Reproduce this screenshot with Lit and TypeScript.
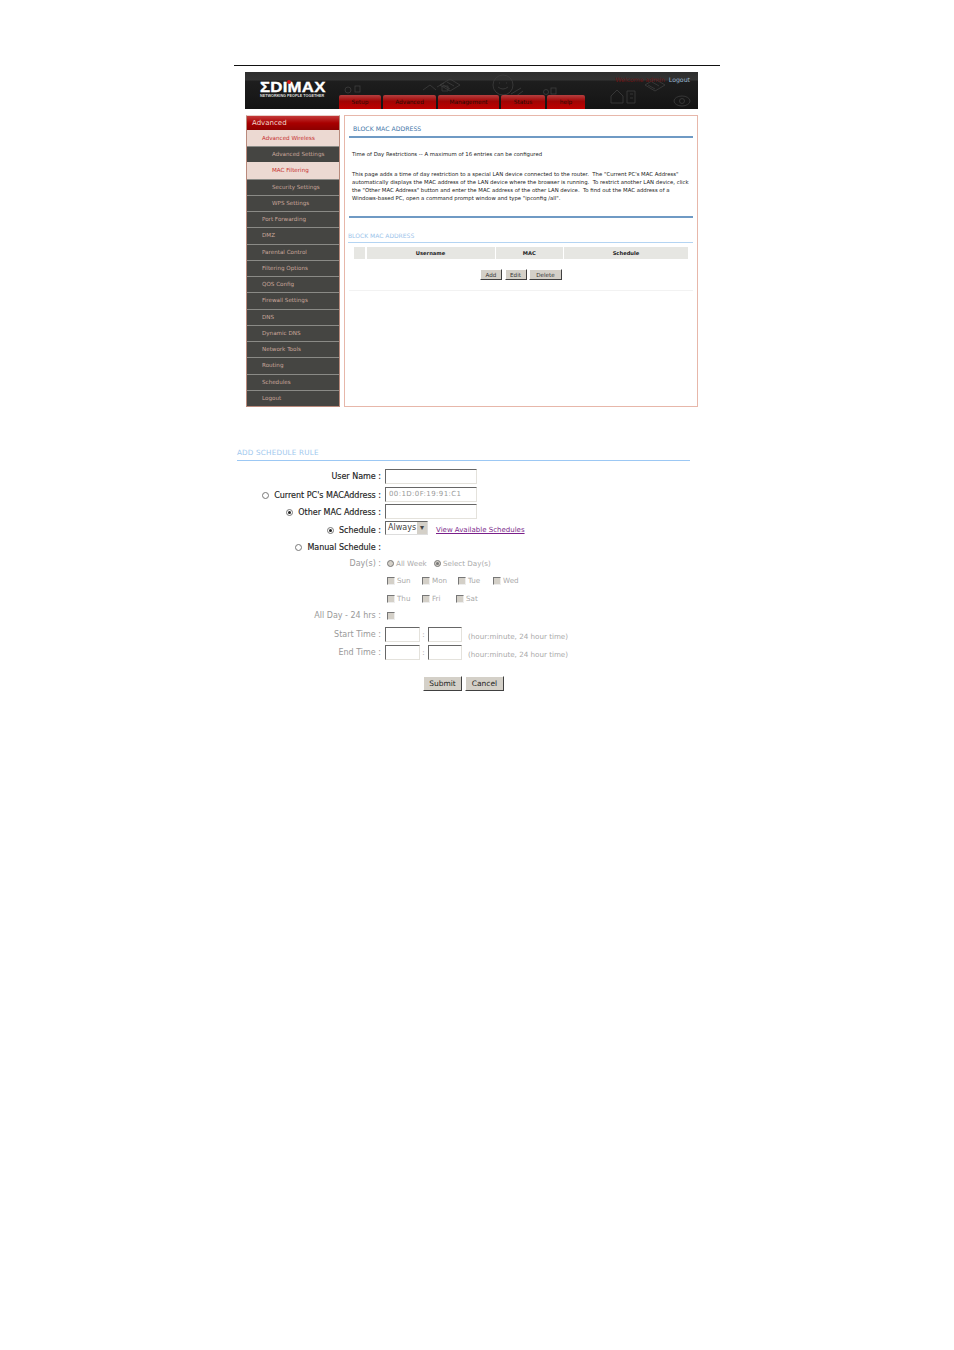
import { LitElement, html, css, svg } from "lit";
import { customElement } from "lit/decorators.js";

const NAV: [string, string][] = [
  ["Advanced Wireless", "on"],
  ["Advanced Settings", "sub"],
  ["MAC Filtering", "on sub"],
  ["Security Settings", "sub"],
  ["WPS Settings", "sub"],
  ["Port Forwarding", ""],
  ["DMZ", ""],
  ["Parental Control", ""],
  ["Filtering Options", ""],
  ["QOS Config", ""],
  ["Firewall Settings", ""],
  ["DNS", ""],
  ["Dynamic DNS", ""],
  ["Network Tools", ""],
  ["Routing", ""],
  ["Schedules", ""],
  ["Logout", ""],
];
const TABS: [string, number][] = [["Setup", 42], ["Advanced", 53], ["Management", 61], ["Status", 44], ["help", 38]];

@customElement("app-root")
export class AppRoot extends LitElement {
  static styles = css`
    :host { display: block; width: 954px; height: 1350px; background: #fff; font-family: "DejaVu Sans", Verdana, sans-serif; color: #222; overflow: hidden; }
    .page { padding: 65px 234px 0; }
    .rule { height: 1px; background: #111; width: 486px; }
    .router { margin: 6px 0 0 11px; width: 453px; }
    .head { position: relative; height: 37px; background: linear-gradient(#2e2e2e 0, #343434 22%, #1e1e1e 24%, #141414 100%); overflow: hidden; }
    .art { position: absolute; inset: 0; }
    .logo { position: absolute; left: 15px; top: 7px; color: #fff; width: 70px; }
    .logo b { display: block; font: 900 15px/15px "Liberation Sans", sans-serif; letter-spacing: .2px; transform: scaleX(1.12); transform-origin: left; -webkit-text-stroke: .35px #fff; }
    .logo i { position: absolute; left: 27px; top: 1px; width: 4px; height: 4px; border-radius: 50%; background: #d01818; }
    .logo small { display: block; font: 700 3.75px/4px "Liberation Sans", sans-serif; white-space: nowrap; color: #ddd; }
    .welcome { position: absolute; right: 8px; top: 3px; font: 6.2px/9px "DejaVu Sans", sans-serif; color: #6b1414; white-space: nowrap; }
    .welcome span { color: #9ab6d0; margin-left: 4px; }
    .tabs { position: absolute; left: 94px; bottom: 0; display: flex; gap: 2px; }
    .tab { height: 14px; box-sizing: border-box; background: linear-gradient(#b54040, #a00404 45%, #c00000); border-top-left-radius: 2px; border-top-right-radius: 2px; color: #2a0c06; font: 5.8px/15px "DejaVu Sans", sans-serif; text-align: center; }
    .cols { display: flex; gap: 4px; margin-top: 6px; }
    .side { width: 94px; height: 292px; margin-left: 1px; box-sizing: border-box; border: 1px solid #b98a7c; border-top-color: #e8cfc8; background: #444; display: flex; flex-direction: column; }
    .side h2 { margin: 0; height: 14px; font: 400 7px/15px "DejaVu Sans", sans-serif; color: #f0d8d0; padding-left: 5px; background: linear-gradient(#c43a3a, #a80000 50%, #8c0000); }
    .item { flex: 1; box-sizing: border-box; border-top: 1px solid #8a8a86; background: #454542; color: #c9a79c; font: 5.6px/15px "DejaVu Sans", sans-serif; padding-left: 15px; white-space: nowrap; }
    .item.sub { padding-left: 25px; }
    .item.on { background: #ecd9d2; color: #c62e2e; border-top-color: #ecd9d2; }
    .main { width: 354px; height: 292px; box-sizing: border-box; border: 1px solid #e7b7aa; padding: 0 4px 0 4px; }
    .title { margin: 9px 0 0 4px; font: 6.2px/8px "DejaVu Sans", sans-serif; color: #3f76a8; height: 9px; }
    .bar { height: 2px; background: #6f9ac4; margin-top: 2px; }
    .p { margin: 0 0 0 3px; font: 5.35px/8px "DejaVu Sans", sans-serif; color: #222; white-space: nowrap; }
    .p.first { margin-top: 12px; }
    .p.second { margin-top: 12px; }
    .bar.b2 { margin-top: 13.5px; }
    .sub2 { margin-top: 14px; font: 6px/7px "DejaVu Sans", sans-serif; color: #9cc4ea; border-bottom: 1px solid #b4d4f2; padding-bottom: 3.5px; height: 7px; margin-left: -1px; }
    .thead { display: grid; grid-template-columns: 11px 128px 66.5px 1fr; gap: 1.5px; margin: 4px 5px 0 5px; height: 12px; }
    .thead div { background: #e6e6e2; font: 700 5.2px/12px "DejaVu Sans", sans-serif; text-align: center; color: #222; }
    .btns { display: flex; justify-content: center; gap: 2.5px; margin-top: 10px; padding-bottom: 10px; border-bottom: 1px solid #f2f2f2; }
    .btn { box-sizing: border-box; background: #d4d0c8; border: 1px solid; border-color: #fff #404040 #404040 #fff; font: 5.6px/10px "DejaVu Sans", sans-serif; color: #333; height: 11px; text-align: center; }
    .w22 { width: 22px; } .w33 { width: 33px; }
    .form { margin: 42px 0 0 3px; width: 453px; }
    .ftitle { font: 7.2px/8px "DejaVu Sans", sans-serif; color: #a0c8ee; height: 10px; border-bottom: 1px solid #9cc8f4; padding-bottom: 1px; letter-spacing: .2px; }
    .row { display: grid; grid-template-columns: 144px 1fr; column-gap: 4px; align-items: center; height: 17.5px; font-size: 7.15px; }
    .first-row { margin-top: 7px; }
    .up15 { margin-top: 1.5px; } .up05 { margin-top: .5px; } .dn05 { margin-top: -.5px; } .dn15 { margin-top: -1.5px; }
    .l { display: flex; justify-content: flex-end; align-items: center; gap: 5px; white-space: nowrap; color: #222; font-size: 8px; -webkit-text-stroke: .15px #222; }
    .l.dis { color: #999; -webkit-text-stroke: 0; }
    .v { display: flex; align-items: center; gap: 0; color: #aaa; white-space: nowrap; }
    .lift { position: relative; top: -1px; }
    .in { box-sizing: border-box; width: 92px; height: 15px; background: #fff; border: 1px solid; border-color: #666 #e4e2dc #e4e2dc #666; font-size: 7px; line-height: 13px; padding-left: 3px; color: #999; letter-spacing: .4px; }
    .in.t { width: 34.5px; }
    .sel { box-sizing: border-box; width: 43px; height: 14px; border: 1px solid; border-color: #666 #ddd #ddd #666; display: flex; font-size: 8px; line-height: 12px; color: #444; padding-left: 2px; justify-content: space-between; margin-top: -4px; }
    .sel u { width: 10px; background: #d4d0c8; text-decoration: none; display: flex; align-items: center; justify-content: center; }
    .link { margin-left: 8px; color: #7a1f8a; text-decoration: underline; font-size: 7px; }
    .r { display: inline-block; box-sizing: border-box; width: 7px; height: 7px; border-radius: 50%; border: 1px solid #777; background: #fff; position: relative; flex: none; }
    .r.c::after { content: ""; position: absolute; inset: 1px; border-radius: 50%; background: #222; }
    .r.d { background: #d4d0c8; }
    .r.d.c::after { background: #777; }
    .ck { display: inline-block; box-sizing: border-box; width: 8px; height: 8px; background: #d4d0c8; border: 1px solid; border-color: #777 #eee #eee #777; flex: none; margin: 0 2px 0 2px; }
    .opt { display: flex; align-items: center; }
    .hint { margin-left: 6px; padding-top: 4px; }
    .sep { width: 8px; text-align: center; }
    .actions { display: flex; gap: 3px; margin: 14px 0 0 186px; }
    .fb { box-sizing: border-box; width: 39px; height: 15px; background: #d4d0c8; border: 1px solid; border-color: #fff #404040 #404040 #fff; font-size: 7.5px; line-height: 13px; text-align: center; color: #222; }
  `;

  art() {
    return svg`<svg class="art" width="453" height="37" viewBox="0 0 453 37" fill="none" stroke="#3e3e3e" stroke-width=".8">
      <circle cx="103" cy="18" r="3"/><rect x="110" y="14" width="5" height="6"/>
      <path d="M178 18l7-5 6 5M197 14h6v5h-6zM192 15l7-4"/>
      <path d="M195 13l10-6 10 6-10 6zM198 13l7 4M202 10l7 4"/>
      <circle cx="258" cy="13" r="10"/><path d="M254 11h1M261 11h1M253 15q5 4 10 0M266 22l10-6M270 25l8-6"/>
      <circle cx="301" cy="20" r="2.5"/><rect x="306" y="16" width="5" height="6"/>
      <path d="M366 24l6-6 6 6v7h-12zM382 19h8v12h-8zM385 22h3M385 26h3"/>
      <path d="M400 13l10-6 10 6-10 6zM403 13l7 4M407 10l7 4"/>
      <ellipse cx="437" cy="29" rx="8" ry="5"/><circle cx="437" cy="29" r="2.5"/>
    </svg>`;
  }

  day(n: string, w: number) {
    return html`<span class="opt" style="width:${w}px"><i class="ck"></i>${n}</span>`;
  }

  render() {
    return html`<div class="page">
      <div class="rule"></div>
      <div class="router">
        <div class="head">
          ${this.art()}
          <div class="logo"><b>ΣDIMAX</b><i></i><small>NETWORKING PEOPLE TOGETHER</small></div>
          <div class="welcome">Welcome admin<span>Logout</span></div>
          <div class="tabs">${TABS.map(([t, w]) => html`<div class="tab" style="width:${w}px">${t}</div>`)}</div>
        </div>
        <div class="cols">
          <nav class="side">
            <h2>Advanced</h2>
            ${NAV.map(([t, c]) => html`<div class="item ${c}">${t}</div>`)}
          </nav>
          <section class="main">
            <div class="title">BLOCK MAC ADDRESS</div>
            <div class="bar"></div>
            <p class="p first">Time of Day Restrictions -- A maximum of 16 entries can be configured</p>
            <p class="p second">This page adds a time of day restriction to a special LAN device connected to the router.&nbsp; The "Current PC's MAC Address"<br>automatically displays the MAC address of the LAN device where the browser is running.&nbsp; To restrict another LAN device, click<br>the "Other MAC Address" button and enter the MAC address of the other LAN device.&nbsp; To find out the MAC address of a<br>Windows-based PC, open a command prompt window and type "ipconfig /all".</p>
            <div class="bar b2"></div>
            <div class="sub2">BLOCK MAC ADDRESS</div>
            <div class="thead"><div></div><div>Username</div><div>MAC</div><div>Schedule</div></div>
            <div class="btns"><div class="btn w22">Add</div><div class="btn w22">Edit</div><div class="btn w33">Delete</div></div>
          </section>
        </div>
      </div>
      <div class="form">
        <div class="ftitle">ADD SCHEDULE RULE</div>
        <div class="row first-row"><div class="l">User Name :</div><div class="v"><div class="in"></div></div></div>
        <div class="row up15"><div class="l"><i class="r"></i>Current PC's MACAddress :</div><div class="v"><div class="in lift">00:1D:0F:19:91:C1</div></div></div>
        <div class="row dn05"><div class="l"><i class="r c"></i>Other MAC Address :</div><div class="v"><div class="in lift"></div></div></div>
        <div class="row"><div class="l"><i class="r c"></i>Schedule :</div><div class="v"><div class="sel">Always<u>▾</u></div><span class="link">View Available Schedules</span></div></div>
        <div class="row"><div class="l"><i class="r"></i>Manual Schedule :</div><div class="v"></div></div>
        <div class="row dn15"><div class="l dis">Day(s) :</div><div class="v"><span class="opt" style="width:47px;margin-left:2px;gap:2px"><i class="r d"></i>All Week</span><span class="opt" style="gap:2px"><i class="r d c"></i>Select Day(s)</span></div></div>
        <div class="row dn05"><div class="l"></div><div class="v">${this.day("Sun", 35)}${this.day("Mon", 36)}${this.day("Tue", 35)}${this.day("Wed", 30)}</div></div>
        <div class="row up05"><div class="l"></div><div class="v">${this.day("Thu", 35)}${this.day("Fri", 34)}${this.day("Sat", 30)}</div></div>
        <div class="row dn05"><div class="l dis">All Day - 24 hrs :</div><div class="v"><i class="ck"></i></div></div>
        <div class="row up15"><div class="l dis">Start Time :</div><div class="v"><div class="in t"></div><span class="sep">:</span><div class="in t"></div><span class="hint">(hour:minute, 24 hour time)</span></div></div>
        <div class="row up05"><div class="l dis">End Time :</div><div class="v"><div class="in t"></div><span class="sep">:</span><div class="in t"></div><span class="hint">(hour:minute, 24 hour time)</span></div></div>
        <div class="actions"><div class="fb">Submit</div><div class="fb">Cancel</div></div>
      </div>
    </div>`;
  }
}
